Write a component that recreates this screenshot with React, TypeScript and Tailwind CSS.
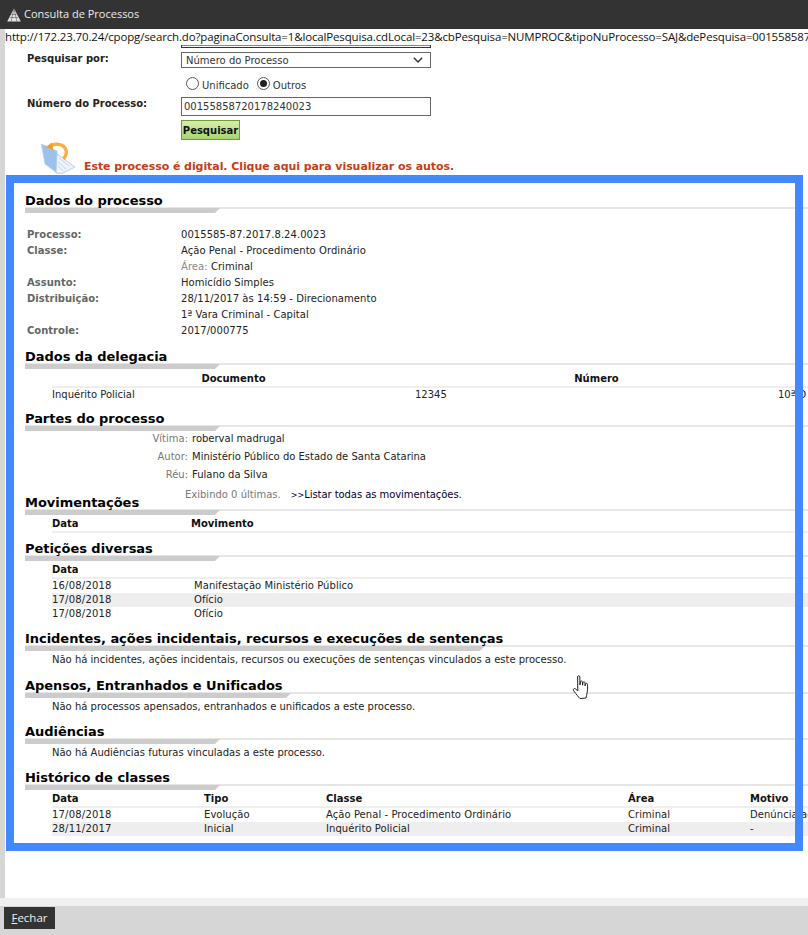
import React from "react";

const font = "font-['DejaVu_Sans','Verdana',sans-serif]";

function Heading({ children, bar = "w-[195px]", className = "" }: { children: React.ReactNode; bar?: string; className?: string }) {
  return (
    <div className={className}>
      <div className="h-[15px] text-[13px] leading-[18px] font-bold text-black whitespace-nowrap tracking-[-0.04px]">{children}</div>
      <div className="h-[6px] border-t-2 border-[#e6e6e6]">
        <div className={`h-[5px] -mt-px bg-[#cccccc] [clip-path:polygon(0_0,100%_0,calc(100%-5px)_100%,0_100%)] ${bar}`} />
      </div>
    </div>
  );
}

function Info({ label, value }: { label?: string; value: React.ReactNode }) {
  return (
    <div className="flex h-4 items-center ml-[2px] whitespace-nowrap">
      <div className="w-[154px] font-bold text-[#666666]">{label}</div>
      <div className="text-[#222222] tracking-[0.05px]">{value}</div>
    </div>
  );
}

function Party({ label, value, h }: { label: string; value: string; h: string }) {
  return (
    <div className={`flex items-center whitespace-nowrap ${h}`}>
      <div className="w-[163px] text-right text-[#777777]">{label}</div>
      <div className="ml-1 text-[#222222]">{value}</div>
    </div>
  );
}

function HeadLine() {
  return <div className="h-[2px] ml-[27px] bg-[#eeeeee]" />;
}

function Note({ children }: { children: React.ReactNode }) {
  return <div className="ml-[27px] mt-[2px] h-[14px] leading-[14px] text-[#222222] whitespace-nowrap">{children}</div>;
}

function Radio({ checked }: { checked?: boolean }) {
  return (
    <span className="w-[13px] h-[13px] -mt-[3px] shrink-0 rounded-full border border-[#555555] bg-white flex items-center justify-center">
      {checked && <span className="w-[7px] h-[7px] rounded-full bg-[#222222]" />}
    </span>
  );
}

function Pyramid() {
  return (
    <svg width="14" height="14" viewBox="0 0 14 14" className="shrink-0">
      <path d="M7 0.5 L13.8 13.5 L0.2 13.5 Z" fill="#e2e2e2" />
      <path d="M7 1 L4 13.5 M7 1 L10 13.5 M4.6 6.5 L9.4 6.5 M3.2 9.5 L10.8 9.5" stroke="#555555" strokeWidth="0.6" fill="none" />
    </svg>
  );
}

function DigitalIcon() {
  return (
    <svg width="36" height="33" viewBox="0 0 36 33" className="shrink-0">
      <path d="M1.3 2 L17 9 L17 31 L5 22 Z" fill="#9cc2ec" stroke="#b5d0ef" strokeWidth="0.8" />
      <path d="M17 12 L35 25 L22 31.5 L16 31 Z" fill="#eef3fa" stroke="#a9c6e6" strokeWidth="0.8" />
      <path d="M19 16 L29 24 M18 20 L26 27 M18 24 L23 29" stroke="#b3c5d8" strokeWidth="0.7" />
      <path d="M11 3.6 C 16 1.4, 24 1.6, 26 8 C 26.8 11, 25.8 14.5, 23.5 17" fill="none" stroke="#f5b041" strokeWidth="3.4" />
      <path d="M6 4.8 L12 0.4 L13.4 8.6 Z" fill="#f0a02a" />
    </svg>
  );
}

function HandCursor() {
  return (
    <svg width="19" height="25" viewBox="0 0 19 25">
      <path
        d="M5.6 1.8 C5.6 0.4 7.8 0.4 7.8 1.8 L8 10 L8.3 6.8 C8.4 5.6 10.3 5.7 10.4 7 L10.6 10.2 L10.9 7.6 C11.1 6.4 12.9 6.6 13 7.9 L13.1 10.8 L13.5 9 C13.8 7.9 15.5 8.2 15.5 9.4 C15.7 12.5 15.6 16 15 18 C14.5 20 14.6 21.5 14 23 L8 23.6 C6.5 22 4.5 19.5 1.6 15.8 C0.6 14.4 2.2 13 3.4 13.8 L5.8 15.8 Z"
        fill="#ffffff"
        stroke="#222222"
        strokeWidth="1"
        strokeLinejoin="round"
      />
    </svg>
  );
}

export default function App() {
  return (
    <div className={`relative w-[808px] h-[935px] overflow-hidden bg-white flex flex-col text-[10px] antialiased ${font}`}>
      <div className="h-[29px] shrink-0 bg-[#333333] flex items-center pl-[7px] gap-[3px] text-[#ececec] text-[11px] font-medium font-['Open_Sans',sans-serif]">
        <Pyramid />
        <span>Consulta de Processos</span>
      </div>

      <div className="flex-1 flex min-h-0">
        <div className="w-[5px] shrink-0 bg-[#d6d6d4]" />
        <div className="flex-1 min-w-0 overflow-hidden">
          <div className="h-4 leading-4 text-[11.5px] text-[#111111] whitespace-nowrap font-['Open_Sans',sans-serif] tracking-[-0.15px]">
            http://172.23.70.24/cpopg/search.do?paginaConsulta=1&amp;localPesquisa.cdLocal=23&amp;cbPesquisa=NUMPROC&amp;tipoNuProcesso=SAJ&amp;dePesquisa=00155858720178240023
          </div>

          <div className="pl-[22px]">
            <div className="ml-[154px] w-[250px] h-[3px] border-x border-b border-[#333333]">
              <div className="h-px bg-[#4f97b5]" />
            </div>
            <div className="flex mt-[4px] h-4">
              <div className="w-[154px] font-bold text-[#222222] leading-[14px]">Pesquisar por:</div>
              <div className="w-[250px] h-4 border border-[#666666] bg-white pl-[4px] pr-[7px] flex items-center justify-between text-[#333333]">
                <span>Número do Processo</span>
                <svg width="10" height="6" viewBox="0 0 10 6"><path d="M0.8 0.8 L5 5 L9.2 0.8" fill="none" stroke="#333333" strokeWidth="1.4" /></svg>
              </div>
            </div>
            <div className="flex items-center ml-[159px] mt-[7px] h-[19px] text-[#333333]">
              <Radio />
              <span className="ml-[3px] mt-[2px]">Unificado</span>
              <span className="ml-2 flex items-center">
                <Radio checked />
              </span>
              <span className="ml-[3px] mt-[2px]">Outros</span>
            </div>
            <div className="flex mt-[3px] h-[19px]">
              <div className="w-[154px] font-bold text-[#222222] leading-[13px]">Número do Processo:</div>
              <div className="w-[250px] h-[19px] border border-[#666666] pl-[2px] flex items-center text-[#333333]">00155858720178240023</div>
            </div>
            <div className="ml-[154px] mt-1 w-[59px] h-5 border border-[#6f9a3f] bg-gradient-to-b from-[#d6efa8] to-[#a8d56e] flex items-center justify-center font-bold text-[#111111]">
              Pesquisar
            </div>
            <div className="flex items-end mt-[3px] ml-[13px] h-8">
              <DigitalIcon />
              <span className="ml-[8px] font-bold text-[11px] text-[#c3401a] whitespace-nowrap tracking-[-0.07px]">Este processo é digital. Clique aqui para visualizar os autos.</span>
            </div>
          </div>

          <div className="pl-5 mt-[17px]">
            <Heading>Dados do processo</Heading>
            <div className="mt-[13px]">
              <Info label="Processo:" value="0015585-87.2017.8.24.0023" />
              <Info label="Classe:" value="Ação Penal - Procedimento Ordinário" />
              <Info value={<><span className="text-[#888888]">Área: </span>Criminal</>} />
              <Info label="Assunto:" value="Homicídio Simples" />
              <Info label="Distribuição:" value="28/11/2017 às 14:59 - Direcionamento" />
              <Info value="1ª Vara Criminal - Capital" />
              <Info label="Controle:" value="2017/000775" />
            </div>

            <Heading className="mt-[10px]">Dados da delegacia</Heading>
            <div className="ml-[27px] mt-[2px] h-[15px] grid grid-cols-[363px_363px_1fr] font-bold text-[#111111] text-center leading-[15px]">
              <div>Documento</div>
              <div>Número</div>
              <div />
            </div>
            <HeadLine />
            <div className="ml-[27px] h-[13px] grid grid-cols-[363px_363px_1fr] leading-[13px] text-[#222222] whitespace-nowrap">
              <div>Inquérito Policial</div>
              <div>12345</div>
              <div>10ª D</div>
            </div>

            <Heading className="mt-[9px]">Partes do processo</Heading>
            <div className="-mt-px">
              <Party label="Vítima:" value="roberval madrugal" h="h-[17px]" />
              <Party label="Autor:" value="Ministério Público do Estado de Santa Catarina" h="h-[18px]" />
              <Party label="Réu:" value="Fulano da Silva" h="h-[18px]" />
            </div>
            <div className="h-[11px] leading-[23px] ml-[160px] text-[#777777] whitespace-nowrap">
              Exibindo 0 últimas.
              <span className="ml-[10px] text-[8px] text-[#000033]">&gt;&gt;</span>
              <span className="text-[#000033] tracking-[-0.06px]">Listar todas as movimentações.</span>
            </div>

            <Heading>Movimentações</Heading>
            <div className="ml-[27px] mt-px h-[15px] flex font-bold text-[#111111] leading-[15px]">
              <div className="w-[139px]">Data</div>
              <div>Movimento</div>
            </div>
            <HeadLine />

            <Heading className="mt-[7px]">Petições diversas</Heading>
            <div className="ml-[27px] mt-[2px] h-[14px] font-bold text-[#111111] leading-[14px]">Data</div>
            <HeadLine />
            {[
              ["16/08/2018", "Manifestação Ministério Público", ""],
              ["17/08/2018", "Ofício", "bg-[#eeeeee]"],
              ["17/08/2018", "Ofício", ""],
            ].map(([d, t, bg], i) => (
              <div key={i} className={`ml-[27px] h-[14px] flex leading-[14px] text-[#222222] tracking-[0.06px] ${bg}`}>
                <div className="w-[142px] tracking-[0.2px]">{d}</div>
                <div>{t}</div>
              </div>
            ))}

            <Heading className="mt-[9px]" bar="w-[460px]">Incidentes, ações incidentais, recursos e execuções de sentenças</Heading>
            <Note>Não há incidentes, ações incidentais, recursos ou execuções de sentenças vinculados a este processo.</Note>

            <Heading className="mt-[10px]" bar="w-[266px]">Apensos, Entranhados e Unificados</Heading>
            <Note>Não há processos apensados, entranhados e unificados a este processo.</Note>

            <Heading className="mt-[9px]">Audiências</Heading>
            <Note>Não há Audiências futuras vinculadas a este processo.</Note>

            <Heading className="mt-[9px]">Histórico de classes</Heading>
            <div className="ml-[27px] mt-[2px] h-[14px] grid grid-cols-[152px_122px_302px_122px_1fr] font-bold text-[#111111] leading-[14px]">
              <div>Data</div>
              <div>Tipo</div>
              <div>Classe</div>
              <div>Área</div>
              <div>Motivo</div>
            </div>
            <HeadLine />
            {[
              ["17/08/2018", "Evolução", "Ação Penal - Procedimento Ordinário", "Criminal", "Denúncia ac", ""],
              ["28/11/2017", "Inicial", "Inquérito Policial", "Criminal", "-", "bg-[#eeeeee]"],
            ].map(([a, b, c, d, e, bg], i) => (
              <div key={i} className={`ml-[27px] h-[14px] grid grid-cols-[152px_122px_302px_122px_1fr] leading-[14px] text-[#222222] whitespace-nowrap tracking-[0.06px] ${bg}`}>
                <div className="tracking-[0.2px]">{a}</div>
                <div>{b}</div>
                <div>{c}</div>
                <div>{d}</div>
                <div>{e}</div>
              </div>
            ))}
          </div>
        </div>
      </div>

      <div className="h-2 shrink-0 bg-[#f0f0f0]" />
      <div className="h-[29px] shrink-0 bg-[#d6d6d6] pl-1 pt-px">
        <div className="w-[51px] h-[22px] bg-[#333333] text-[#f0f0f0] text-[11.5px] flex items-center justify-center font-['Open_Sans',sans-serif]">
          <span><span className="underline">F</span>echar</span>
        </div>
      </div>

      <div className="absolute left-[6px] top-[175px] w-[797px] h-[676px] border-[8px] border-[#4289ff]" />
      <div className="absolute left-[572px] top-[675px]"><HandCursor /></div>
    </div>
  );
}
